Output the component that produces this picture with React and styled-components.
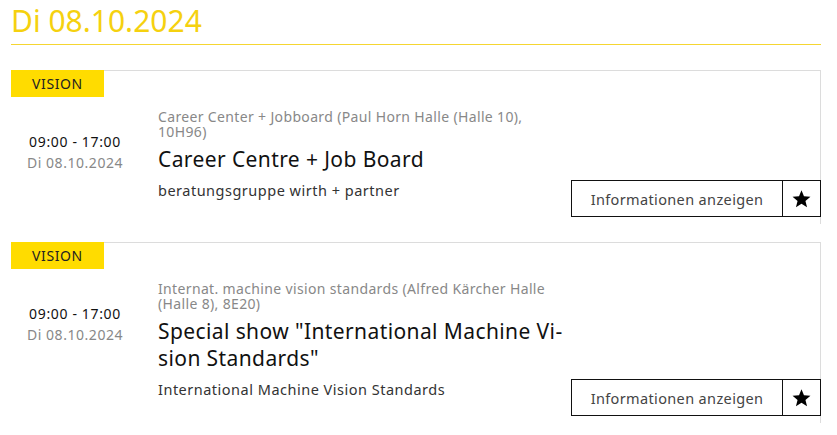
import React from 'react';
import styled, { createGlobalStyle } from 'styled-components';

const GlobalStyle = createGlobalStyle`
  body {
    margin: 0;
    background: #fff;
    font-family: "Noto Sans", Lato, sans-serif;
    color: #111;
  }
`;

const Page = styled.div`
  padding: 0 16px 0 11px;
`;

const DayHeading = styled.h2`
  margin: 0 0 25px;
  padding: 4px 0 6px;
  font-size: 30px;
  font-weight: 400;
  line-height: 34px;
  color: #f5d10f;
  border-bottom: 1px solid #f5d631;
`;

const Card = styled.article`
  border-top: 1px solid #dcdcdc;
  border-right: 1px solid #dcdcdc;
  padding-bottom: 7px;
  margin-bottom: 18px;
`;

const Badge = styled.div`
  width: 93px;
  height: 27px;
  margin-top: -1px;
  background: #ffdc00;
  color: #222;
  font-size: 14px;
  line-height: 28px;
  letter-spacing: 0.6px;
  text-align: center;
`;

const Body = styled.div`
  display: flex;
  padding-top: 12px;
`;

const TimeCol = styled.div`
  width: 128px;
  flex-shrink: 0;
  display: flex;
  flex-direction: column;
  align-items: center;
  padding-top: 22px;
  font-size: 14px;
  line-height: 21px;
`;

const Hours = styled.span`
  color: #111;
  letter-spacing: 0.65px;
`;

const DateLine = styled.span`
  color: #888;
  letter-spacing: 0.55px;
`;

const Content = styled.div`
  width: 412px;
  margin-left: 19px;
  padding-bottom: 16px;
`;

const Location = styled.div`
  font-size: 14px;
  line-height: 15px;
  letter-spacing: 0.35px;
  color: #888;
`;

const Title = styled.h3`
  margin: 7px 0 6px;
  font-size: 21px;
  font-weight: 400;
  line-height: 27px;
  letter-spacing: 0.4px;
  color: #111;
`;

const Company = styled.div`
  font-size: 14.5px;
  line-height: 22px;
  letter-spacing: 0.5px;
  color: #333;
`;

const Actions = styled.div`
  flex: 1;
  display: flex;
  justify-content: flex-end;
  align-items: flex-end;
  margin-right: -1px;
`;

const ButtonGroup = styled.div`
  display: flex;
  height: 37px;
  border: 1px solid #111;
  box-sizing: border-box;
`;

const InfoButton = styled.button`
  width: 211px;
  border: 0;
  border-right: 1px solid #111;
  background: #fff;
  font-family: inherit;
  font-size: 14.5px;
  letter-spacing: 0.36px;
  color: #444;
  cursor: pointer;
`;

const StarButton = styled.button`
  width: 37px;
  border: 0;
  background: #fff;
  display: flex;
  align-items: center;
  justify-content: center;
  padding: 0;
  cursor: pointer;
`;

const Star = () => (
  <svg width="19" height="19" viewBox="0 0 24 24">
    <path
      fill="#000"
      d="M12 1.5l3.1 7.6 8.2.6-6.3 5.3 2 8-7-4.4-7 4.4 2-8L.7 9.7l8.2-.6z"
    />
  </svg>
);

const events = [
  {
    id: 1,
    tag: 'VISION',
    hours: '09:00 - 17:00',
    date: 'Di 08.10.2024',
    location: 'Career Center + Jobboard (Paul Horn Halle (Halle 10), 10H96)',
    title: 'Career Centre + Job Board',
    company: 'beratungsgruppe wirth + partner',
  },
  {
    id: 2,
    tag: 'VISION',
    hours: '09:00 - 17:00',
    date: 'Di 08.10.2024',
    location: 'Internat. machine vision standards (Alfred Kärcher Halle (Halle 8), 8E20)',
    title: 'Special show "International Machine Vi\u00ADsion Standards"',
    company: 'International Machine Vision Standards',
  },
];

const EventCard = ({ tag, hours, date, location, title, company }) => (
  <Card>
    <Badge>{tag}</Badge>
    <Body>
      <TimeCol>
        <Hours>{hours}</Hours>
        <DateLine>{date}</DateLine>
      </TimeCol>
      <Content>
        <Location>{location}</Location>
        <Title>{title}</Title>
        <Company>{company}</Company>
      </Content>
      <Actions>
        <ButtonGroup>
          <InfoButton>Informationen anzeigen</InfoButton>
          <StarButton aria-label="Merken">
            <Star />
          </StarButton>
        </ButtonGroup>
      </Actions>
    </Body>
  </Card>
);

const App = () => (
  <Page>
    <GlobalStyle />
    <DayHeading>Di 08.10.2024</DayHeading>
    {events.map((event) => (
      <EventCard key={event.id} {...event} />
    ))}
  </Page>
);

export default App;
